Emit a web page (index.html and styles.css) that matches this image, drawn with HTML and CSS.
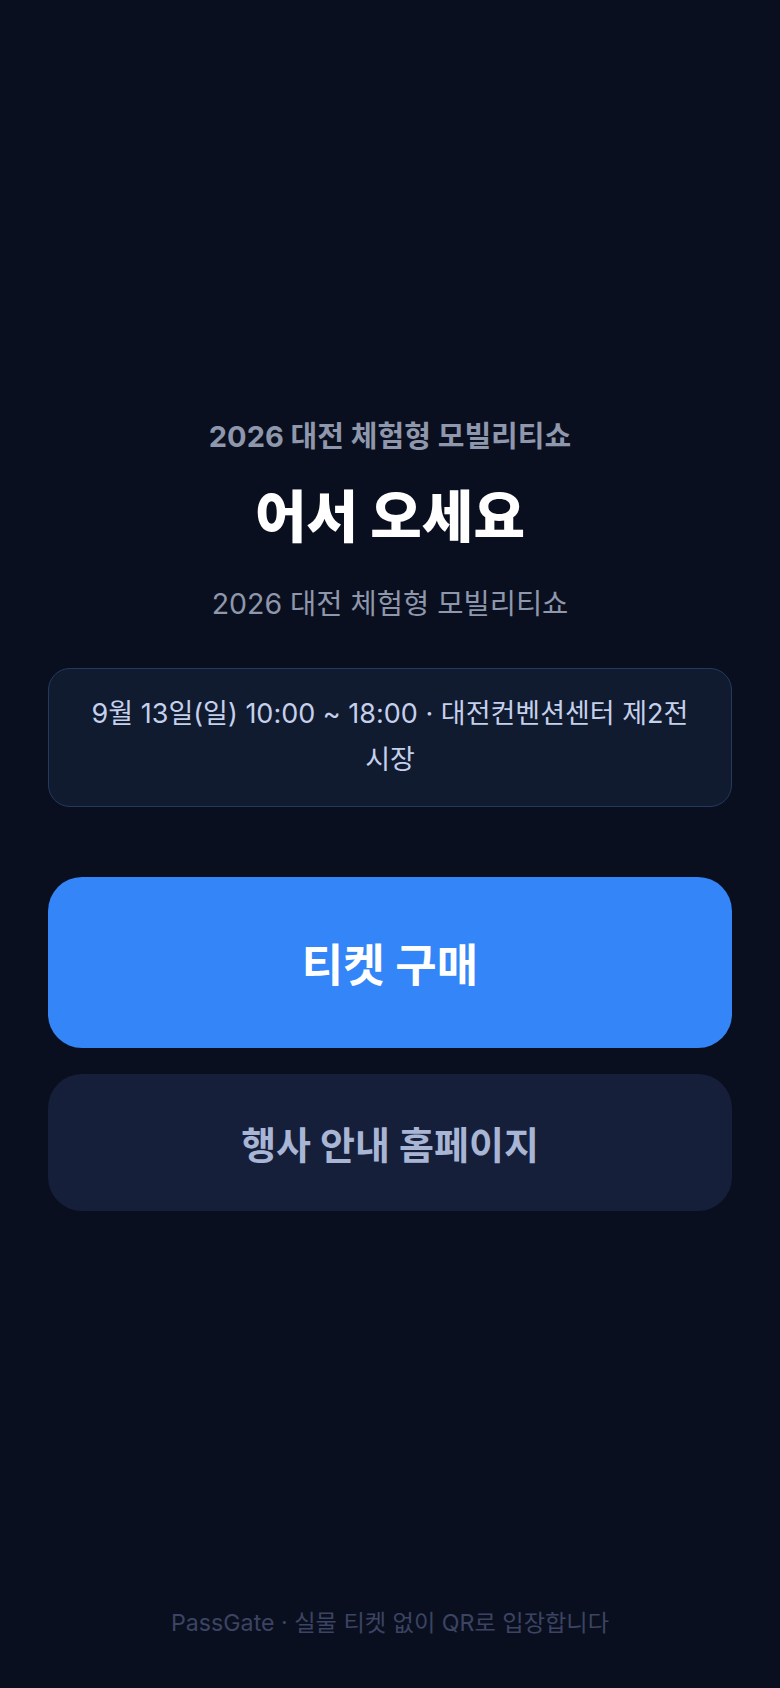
FILE: index.html
```html
<!DOCTYPE html>
<html lang="ko">
<head>
  <meta charset="UTF-8" />
  <meta name="viewport" content="width=device-width, initial-scale=1.0"/>
  <title>PassGate</title>
  <link rel="stylesheet" href="styles.css">
</head>
<body>

  <div class="page">
    <main class="main">
      <p class="eyebrow">2026 대전 체험형 모빌리티쇼</p>
      <h1 class="title">어서 오세요</h1>
      <p class="subtitle">2026 대전 체험형 모빌리티쇼</p>

      <div class="info">9월 13일(일) 10:00 ~ 18:00 · 대전컨벤션센터 제2전시장</div>

      <div class="actions">
        <button class="btn btn-primary">티켓 구매</button>
        <button class="btn btn-secondary">행사 안내 홈페이지</button>
      </div>
    </main>

    <footer class="footer">PassGate · 실물 티켓 없이 QR로 입장합니다</footer>
  </div>

</body>
</html>
```

FILE: styles.css
```css
:root {
  --bg: #0a0f1f;
  --card: #111b2f;
  --card-border: #24395f;
  --muted: #8e97ab;
  --info-text: #c5d0ec;
  --primary: #3385f8;
  --secondary: #161f3a;
  --secondary-text: #a8b5d4;
  --footer-text: #3b4462;
}

* {
  box-sizing: border-box;
  margin: 0;
  padding: 0;
}

body {
  font-family: 'Inter', 'Noto Sans CJK KR', sans-serif;
  background-color: var(--bg);
  color: #fff;
  min-height: 100vh;
}

.page {
  min-height: 100vh;
  display: flex;
  flex-direction: column;
  padding: 0 48px;
}

.main {
  flex: 1;
  display: flex;
  flex-direction: column;
  justify-content: center;
  text-align: center;
  padding-top: 22px;
}

.eyebrow {
  font-size: 29px;
  line-height: 36px;
  font-weight: 700;
  color: var(--muted);
}

.title {
  margin-top: 28px;
  font-size: 56px;
  line-height: 68px;
  font-weight: 800;
  color: #fff;
}

.subtitle {
  margin-top: 35px;
  font-size: 28.5px;
  line-height: 36px;
  font-weight: 400;
  color: var(--muted);
}

.info {
  margin-top: 46px;
  background: var(--card);
  border: 1.5px solid var(--card-border);
  border-radius: 22px;
  padding: 22px 36px 23px;
  font-size: 27px;
  line-height: 46px;
  color: var(--info-text);
}

.actions {
  margin-top: 70px;
  display: flex;
  flex-direction: column;
  gap: 26px;
}

.btn {
  width: 100%;
  border: none;
  font-family: inherit;
  font-weight: 700;
  cursor: pointer;
}

.btn-primary {
  height: 171px;
  border-radius: 34px;
  background-color: var(--primary);
  color: #fff;
  font-size: 45px;
}

.btn-secondary {
  height: 137px;
  border-radius: 34px;
  background-color: var(--secondary);
  color: var(--secondary-text);
  font-size: 38px;
}

.footer {
  text-align: center;
  font-size: 23.2px;
  line-height: 30px;
  color: var(--footer-text);
  padding-bottom: 50px;
}
```
